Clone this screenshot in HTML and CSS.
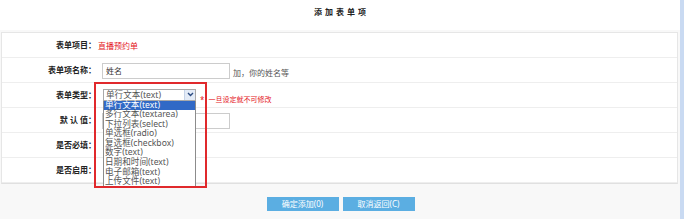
FILE: index.html
```html
<!DOCTYPE html>
<html lang="zh-CN">
<head>
<meta charset="utf-8">
<title>添加表单项</title>
<link rel="stylesheet" href="styles.css">
</head>
<body>
<div class="page">
  <div class="main">
    <div class="title">添加表单项</div>
    <div class="content">
      <div class="form">
        <div class="row">
          <div class="label">表单项目：</div>
          <div class="value"><span class="form-name">直播预约单</span></div>
        </div>
        <div class="row">
          <div class="label">表单项名称：</div>
          <div class="value value-input">
            <div class="input">姓名</div>
            <span class="hint">加，你的姓名等</span>
          </div>
        </div>
        <div class="row">
          <div class="label">表单类型：</div>
          <div class="value value-select">
            <div class="select">
              <span class="select-text">单行文本(text)</span>
              <span class="select-btn">
                <svg width="7" height="5" viewBox="0 0 7 5"><path d="M1 1 L3.5 3.5 L6 1" fill="none" stroke="#2a4a80" stroke-width="1.4"/></svg>
              </span>
              <ul class="options">
                <li class="selected">单行文本(text)</li>
                <li>多行文本(textarea)</li>
                <li>下拉列表(select)</li>
                <li>单选框(radio)</li>
                <li>复选框(checkbox)</li>
                <li>数字(text)</li>
                <li>日期和时间(text)</li>
                <li>电子邮箱(text)</li>
                <li>上传文件(text)</li>
              </ul>
            </div>
            <span class="star">*</span>
            <span class="warn">一旦设定就不可修改</span>
          </div>
        </div>
        <div class="row">
          <div class="label">默 认 值：</div>
          <div class="value value-input">
            <div class="input"></div>
          </div>
        </div>
        <div class="row">
          <div class="label">是否必填：</div>
          <div class="value"></div>
        </div>
        <div class="row">
          <div class="label">是否启用：</div>
          <div class="value"></div>
        </div>
        <div class="highlight"></div>
      </div>
      <div class="actions">
        <button class="btn">确定添加(0)</button>
        <button class="btn">取消返回(C)</button>
      </div>
    </div>
  </div>
  <div class="scrollbar"></div>
</div>
</body>
</html>
```
FILE: styles.css
```css
html, body {
  margin: 0;
  padding: 0;
  background: #ffffff;
}
body {
  font-family: "Noto Sans", "Noto Sans CJK SC", sans-serif;
  font-size: 8px;
  color: #333;
}
.page {
  display: flex;
  width: 684px;
  height: 219px;
  overflow: hidden;
}
.main {
  flex: 1;
  display: flex;
  flex-direction: column;
}
.scrollbar {
  width: 4px;
  background: #c9daf2;
}
.title {
  height: 30px;
  line-height: 23px;
  text-align: center;
  font-weight: bold;
  font-size: 8px;
  letter-spacing: 3px;
  color: #222;
  padding-left: 3px;
}
.content {
  flex: 1;
  background: #f8f8f8;
  padding: 2px 2px 0 1px;
}
.form {
  position: relative;
  background: #fff;
  border: 1px solid #e6e6e6;
  border-bottom-color: #e0e0e0;
}
.row {
  display: grid;
  grid-template-columns: 94px 1fr;
  height: 25px;
  box-sizing: border-box;
  border-bottom: 1px solid #eeeeee;
}
.row:last-of-type {
  border-bottom: none;
  height: 24px;
}
.label {
  text-align: right;
  font-weight: bold;
  font-size: 8px;
  line-height: 24px;
  color: #222;
  white-space: pre;
}
.value {
  display: flex;
  align-items: center;
  padding-left: 2px;
}
.form-name {
  color: #e4141b;
  font-size: 8px;
}
.value-input {
  padding-left: 6px;
}
.input {
  width: 125px;
  height: 14px;
  border: 1px solid #cccccc;
  background: #fff;
  font-size: 8px;
  line-height: 13px;
  padding-left: 3px;
  box-sizing: content-box;
  color: #333;
  margin-top: 1px;
}
.value-input .input {
  width: 123px;
}
.hint {
  margin-left: 3px;
  padding-top: 5px;
  color: #555;
  font-size: 8px;
}
.value-select {
  padding-left: 7px;
}
.select {
  position: relative;
  width: 91px;
  height: 10px;
  border: 1px solid #a9a9a9;
  background: #fff;
  display: flex;
  margin-top: -1px;
}
.select-text {
  flex: 1;
  font-size: 8.6px;
  line-height: 10px;
  padding-left: 2px;
  color: #555;
}
.select-btn {
  width: 10px;
  height: 10px;
  background: #e3ebf7;
  border-left: 1px solid #c5d3e8;
  display: flex;
  align-items: center;
  justify-content: center;
}
.options {
  position: absolute;
  top: 11px;
  left: -1px;
  width: 91px;
  height: 86px;
  margin: 0;
  padding: 0;
  list-style: none;
  background: #fff;
  border: 1px solid #8c8c8c;
  border-top: none;
  z-index: 2;
}
.options li {
  height: 9.6px;
  line-height: 9.6px;
  font-size: 8.6px;
  padding-left: 1px;
  color: #555;
  white-space: nowrap;
}
.options li.selected {
  background: #3169c6;
  color: #fff;
}
.star {
  color: #e4141b;
  margin-left: 4px;
  margin-top: 8px;
  font-size: 8px;
}
.warn {
  color: #e4141b;
  margin-left: 4px;
  margin-top: 7px;
  font-size: 7px;
}
.highlight {
  position: absolute;
  left: 92px;
  top: 49px;
  width: 109px;
  height: 102px;
  border: 2px solid #e0292c;
  z-index: 3;
  pointer-events: none;
}
.actions {
  display: flex;
  justify-content: center;
  gap: 4px;
  padding-top: 13px;
  padding-left: 2px;
}
.btn {
  width: 72px;
  height: 14px;
  border: none;
  background: #5baee2;
  color: #fff;
  font-family: "Noto Sans", "Noto Sans CJK SC", sans-serif;
  font-size: 8px;
  padding: 0;
  line-height: 14px;
}
```
